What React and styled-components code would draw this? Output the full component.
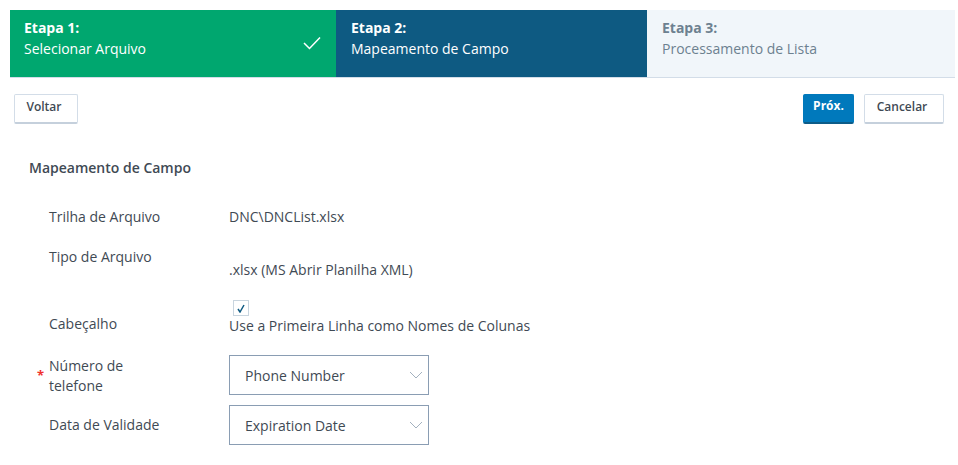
import React from 'react'
import styled, { createGlobalStyle } from 'styled-components'

const GlobalStyle = createGlobalStyle`
  html, body {
    margin: 0;
    padding: 0;
    background: #fff;
    overflow: hidden;
  }
  body {
    font-family: "Open Sans", "Noto Sans", sans-serif;
    font-size: 14px;
    color: #3f4a54;
  }
`

const Page = styled.div`
  width: 958px;
  height: 465px;
  padding: 10px 3px 0 10px;
  box-sizing: border-box;
  overflow: hidden;
`

const Stepper = styled.div`
  display: flex;
  height: 68px;
  box-sizing: border-box;
  border-bottom: 1px solid #d3dde8;
`

const colours = {
  done: { bg: '#00a76f', fg: '#ffffff' },
  active: { bg: '#0e5a82', fg: '#ffffff' },
  todo: { bg: '#f1f6fa', fg: '#6d8190' },
}

const Step = styled.div`
  position: relative;
  width: ${(p) => p.$width}px;
  height: 67px;
  box-sizing: border-box;
  padding: 7px 14px 0 ${(p) => (p.$state === 'done' ? 14 : 15)}px;
  line-height: 21px;
  background: ${(p) => colours[p.$state].bg};
  color: ${(p) => colours[p.$state].fg};
`

const StepNumber = styled.div`
  font-weight: 700;
`

const Tick = styled.svg`
  position: absolute;
  right: 15px;
  top: 26px;
  width: 18px;
  height: 14px;
`

const Toolbar = styled.div`
  display: flex;
  align-items: flex-start;
  justify-content: space-between;
  padding: 16px 11px 0 4px;
`

const ButtonGroup = styled.div`
  display: flex;
  gap: 10px;
`

const Button = styled.button`
  height: 30px;
  width: ${(p) => p.$width}px;
  padding: ${(p) => (p.$primary ? '0 0 6px' : '0 4px 4px 0')};
  box-sizing: border-box;
  font-family: inherit;
  font-size: 12px;
  font-weight: ${(p) => (p.$primary ? 700 : 600)};
  border-radius: 2px;
  background: ${(p) => (p.$primary ? '#0079bc' : '#fff')};
  color: ${(p) => (p.$primary ? '#fff' : '#3f4a54')};
  border: 1px solid ${(p) => (p.$primary ? '#0079bc' : '#d3dde8')};
  border-bottom: 2px solid ${(p) => (p.$primary ? '#0d5c88' : '#c5d0dc')};
`

const Title = styled.h2`
  margin: 34px 0 0 19px;
  font-size: 14px;
  font-weight: 600;
  line-height: 20px;
  color: #3f4a54;
`

const Form = styled.div`
  display: grid;
  grid-template-columns: 180px 1fr;
  margin: 0 0 0 39px;
  padding-top: 29px;
  line-height: 20px;
`

const Label = styled.div`
  position: relative;
  width: 118px;
  margin-top: ${(p) => p.$top || 0}px;
`

const Value = styled.div`
  margin-top: ${(p) => p.$top || 0}px;
`

const Required = styled.span`
  position: absolute;
  left: -12px;
  top: 9px;
  color: #f0322d;
  font-size: 13px;
  font-weight: 700;
`

const CheckBox = styled.span`
  display: flex;
  align-items: center;
  justify-content: center;
  width: 16px;
  height: 16px;
  box-sizing: border-box;
  margin-left: 4px;
  border: 1px solid #c9d5df;
`

const Select = styled.div`
  display: flex;
  align-items: center;
  justify-content: space-between;
  width: 200px;
  height: 40px;
  box-sizing: border-box;
  padding: 1px 5px 0 15px;
  border: 1px solid #8a9db3;
  margin-top: ${(p) => p.$top || 0}px;
`

const ChevronIcon = styled.svg`
  width: 14px;
  height: 8px;
  margin-top: -1px;
`

const Chevron = () => (
  <ChevronIcon viewBox="0 0 14 8" fill="none">
    <path d="M1 1l6 6 6-6" stroke="#a3b1bf" strokeWidth="1" />
  </ChevronIcon>
)

export default function App() {
  return (
    <>
      <GlobalStyle />
      <Page>
        <Stepper>
          <Step $state="done" $width={326}>
            <StepNumber>Etapa 1:</StepNumber>
            Selecionar Arquivo
            <Tick viewBox="0 0 18 14" fill="none">
              <path d="M1 7l5.5 5.5L17 1.5" stroke="#fff" strokeWidth="1.5" />
            </Tick>
          </Step>
          <Step $state="active" $width={311}>
            <StepNumber>Etapa 2:</StepNumber>
            Mapeamento de Campo
          </Step>
          <Step $state="todo" $width={308}>
            <StepNumber>Etapa 3:</StepNumber>
            Processamento de Lista
          </Step>
        </Stepper>
        <Toolbar>
          <Button $width={64}>Voltar</Button>
          <ButtonGroup>
            <Button $primary $width={51}>Próx.</Button>
            <Button $width={80}>Cancelar</Button>
          </ButtonGroup>
        </Toolbar>
        <Title>Mapeamento de Campo</Title>
        <Form>
          <Label>Trilha de Arquivo</Label>
          <Value>DNC\DNCList.xlsx</Value>
          <Label $top={20}>Tipo de Arquivo</Label>
          <Value $top={33}>.xlsx (MS Abrir Planilha XML)</Value>
          <Label $top={34}>Cabeçalho</Label>
          <Value $top={20}>
            <CheckBox>
              <svg width="8" height="9" viewBox="0 0 8 9" fill="none">
                <path d="M1 5l2 3 4-7" stroke="#0e5a82" strokeWidth="1.5" />
              </svg>
            </CheckBox>
            Use a Primeira Linha como Nomes de Colunas
          </Value>
          <Label $top={20}>
            <Required>*</Required>
            Número de telefone
          </Label>
          <Select $top={19}>
            Phone Number
            <Chevron />
          </Select>
          <Label $top={19}>Data de Validade</Label>
          <Select $top={9}>
            Expiration Date
            <Chevron />
          </Select>
        </Form>
      </Page>
    </>
  )
}
